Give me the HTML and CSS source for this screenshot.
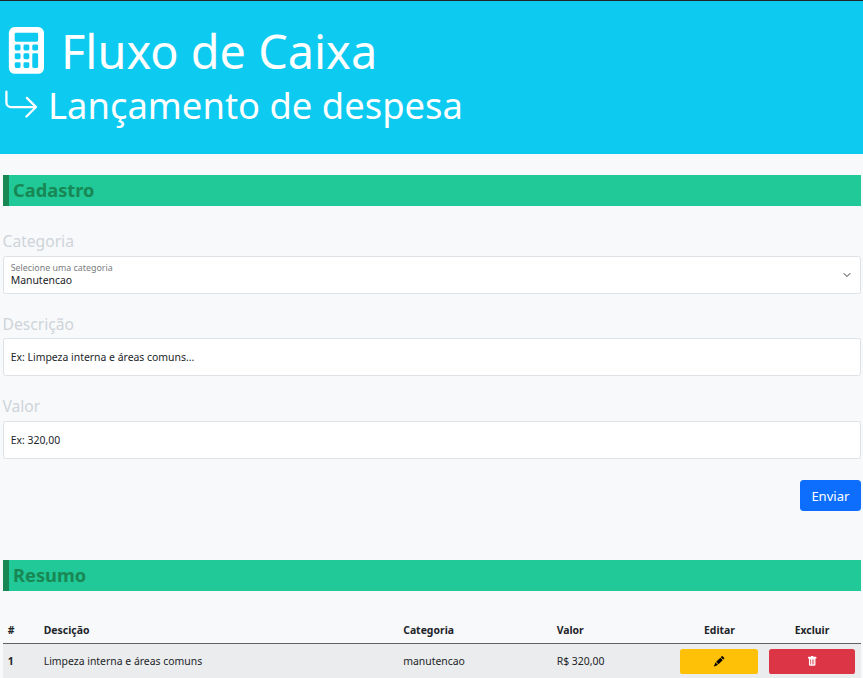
FILE: index.html
```html
<!DOCTYPE html>
<html lang="pt-BR">
<head>
<meta charset="utf-8">
<title>Fluxo de Caixa</title>
<link rel="stylesheet" href="styles.css">
</head>
<body>
<header class="hero">
  <h1 class="hero-title">
    <svg class="icon" viewBox="0 0 16 16" fill="currentColor"><path fill-rule="evenodd" d="M2 2a2 2 0 0 1 2-2h8a2 2 0 0 1 2 2v12a2 2 0 0 1-2 2H4a2 2 0 0 1-2-2V2zm2 .5v2a.5.5 0 0 0 .5.5h7a.5.5 0 0 0 .5-.5v-2a.5.5 0 0 0-.5-.5h-7a.5.5 0 0 0-.5.5zm0 4v1a.5.5 0 0 0 .5.5h1a.5.5 0 0 0 .5-.5v-1a.5.5 0 0 0-.5-.5h-1a.5.5 0 0 0-.5.5zM4.500 9a.5.5 0 0 0-.5.5v1a.5.5 0 0 0 .5.5h1a.5.5 0 0 0 .5-.5v-1a.5.5 0 0 0-.5-.5h-1zM4 12.500v1a.5.5 0 0 0 .5.5h1a.5.5 0 0 0 .5-.5v-1a.5.5 0 0 0-.5-.5h-1a.5.5 0 0 0-.5.5zM7.500 6a.5.5 0 0 0-.5.5v1a.5.5 0 0 0 .5.5h1a.5.5 0 0 0 .5-.5v-1a.5.5 0 0 0-.5-.5h-1zM7 9.500v1a.5.5 0 0 0 .5.5h1a.5.5 0 0 0 .5-.5v-1a.5.5 0 0 0-.5-.5h-1a.5.5 0 0 0-.5.5zm.5 2.500a.5.5 0 0 0-.5.5v1a.5.5 0 0 0 .5.5h1a.5.5 0 0 0 .5-.5v-1a.5.5 0 0 0-.5-.5h-1zM10 6.500v1a.5.5 0 0 0 .5.5h1a.5.5 0 0 0 .5-.5v-1a.5.5 0 0 0-.5-.5h-1a.5.5 0 0 0-.5.5zm.5 2.500a.5.5 0 0 0-.5.5v4a.5.5 0 0 0 .5.5h1a.5.5 0 0 0 .5-.5v-4a.5.5 0 0 0-.5-.5h-1z"/></svg>
    <span>Fluxo de Caixa</span>
  </h1>
  <p class="hero-subtitle">
    <svg class="icon" viewBox="0 0 16 16" fill="currentColor"><path fill-rule="evenodd" d="M1.500 1.500A.5.5 0 0 0 1 2v4.800a2.500 2.500 0 0 0 2.500 2.500h9.793l-3.347 3.346a.5.5 0 0 0 .708.708l4.200-4.200a.5.5 0 0 0 0-.708l-4-4a.5.5 0 0 0-.708.708L13.293 8.300H3.500A1.500 1.500 0 0 1 2 6.800V2a.5.5 0 0 0-.5-.5z"/></svg>
    <span>Lançamento de despesa</span>
  </p>
</header>
<main class="content">
  <h2 class="section-title">Cadastro</h2>
  <form class="form">
    <div class="group">
      <div class="label">Categoria</div>
      <div class="field select">
        <div><div class="hint">Selecione uma categoria</div><div class="value">Manutencao</div></div>
        <svg class="chevron" viewBox="0 0 16 16" fill="none" stroke="#343a40" stroke-width="2" stroke-linecap="round" stroke-linejoin="round"><path d="m2 5 6 6 6-6"/></svg>
      </div>
    </div>
    <div class="group">
      <div class="label">Descrição</div>
      <div class="field">Ex: Limpeza interna e áreas comuns...</div>
    </div>
    <div class="group">
      <div class="label">Valor</div>
      <div class="field">Ex: 320,00</div>
    </div>
    <button class="submit" type="button">Enviar</button>
  </form>
  <h2 class="section-title">Resumo</h2>
  <table class="table">
    <colgroup><col class="c-id"><col class="c-desc"><col class="c-cat"><col class="c-val"><col class="c-edit"><col class="c-del"></colgroup>
    <thead>
      <tr><th>#</th><th>Descição</th><th>Categoria</th><th>Valor</th><th class="center">Editar</th><th class="center">Excluir</th></tr>
    </thead>
    <tbody>
      <tr>
        <th>1</th><td>Limpeza interna e áreas comuns</td><td>manutencao</td><td>R$ 320,00</td>
        <td><button class="action edit" type="button" aria-label="Editar"><svg viewBox="0 0 16 16" fill="currentColor"><path d="M12.854.146a.5.5 0 0 0-.707 0L10.500 1.793 14.207 5.500l1.647-1.646a.5.5 0 0 0 0-.708l-3-3zm.646 6.061L9.793 2.500 3.293 9H3.500a.5.5 0 0 1 .5.5v.5h.5a.5.5 0 0 1 .5.5v.5h.5a.5.5 0 0 1 .5.5v.5h.5a.5.5 0 0 1 .5.5v.207l6.500-6.500zm-7.468 7.468A.5.5 0 0 1 6 13.500V13h-.5a.5.5 0 0 1-.5-.5V12h-.5a.5.5 0 0 1-.5-.5V11h-.5a.5.5 0 0 1-.5-.5V10h-.5a.499.499 0 0 1-.175-.032l-.179.178a.5.5 0 0 0-.11.168l-2 5a.5.5 0 0 0 .65.65l5-2a.5.5 0 0 0 .168-.11l.178-.178z"/></svg></button></td>
        <td><button class="action delete" type="button" aria-label="Excluir"><svg viewBox="0 0 16 16" fill="currentColor"><path fill-rule="evenodd" d="M2.500 1a1 1 0 0 0-1 1v1a1 1 0 0 0 1 1H3v9a2 2 0 0 0 2 2h6a2 2 0 0 0 2-2V4h.5a1 1 0 0 0 1-1V2a1 1 0 0 0-1-1H10a1 1 0 0 0-1-1H7a1 1 0 0 0-1 1H2.500zm3 4a.5.5 0 0 1 .5.5v7a.5.5 0 0 1-1 0v-7a.5.5 0 0 1 .5-.5zM8 5a.5.5 0 0 1 .5.5v7a.5.5 0 0 1-1 0v-7A.5.5 0 0 1 8 5zm3 .5v7a.5.5 0 0 1-1 0v-7a.5.5 0 0 1 1 0z"/></svg></button></td>
      </tr>
    </tbody>
  </table>
</main>
</body>
</html>
```
FILE: styles.css
```css
* { box-sizing: border-box; }
body {
  margin: 0;
  height: 678px;
  overflow: hidden;
  background: #f8f9fa;
  color: #212529;
  font: 10.43px/16px "Noto Sans", sans-serif;
}
.hero {
  height: 153.6px;
  padding: 22px 2.6px 0;
  border-top: 1px solid #212529;
  background: #0dcaf0;
  color: #fff;
}
.hero-title, .hero-subtitle {
  display: flex;
  align-items: flex-start;
  margin: 0;
  font-weight: 400;
  white-space: nowrap;
}
.hero-title { height: 58px; gap: 11.6px; font-size: 46.85px; line-height: 57px; }
.hero-subtitle { height: 50px; gap: 9px; font-size: 36.4px; line-height: 48.5px; }
.icon { flex: none; width: 1em; height: 1em; }
.hero-title .icon { margin-top: 4px; }
.hero-subtitle .icon { margin-top: 6.3px; }
.content { padding: 21.6px 2.5px 0; }
.section-title {
  height: 30.6px;
  margin: 0;
  padding-left: 4.6px;
  border-left: 6px solid #198754;
  background: #20c997;
  color: #198754;
  font-size: 18.25px;
  font-weight: 700;
  line-height: 30px;
}
.form {
  display: flex;
  flex-direction: column;
  height: 354.2px;
  padding-top: 23.5px;
}
.group { height: 82.5px; }
.label {
  height: 26.4px;
  color: #ced4da;
  font-size: 15.64px;
  line-height: 24px;
}
.field {
  display: flex;
  align-items: center;
  height: 38px;
  padding: 0 7.2px;
  border: 1px solid #dee2e6;
  border-radius: 2.6px;
  background: #fff;
}
.select { justify-content: space-between; }
.hint { color: #7a7d80; font-size: 8.87px; line-height: 12px; }
.value { line-height: 13px; }
.chevron { width: 8px; height: 8px; margin-right: 1.5px; }
.submit {
  align-self: flex-end;
  width: 60.3px;
  height: 31px;
  margin-top: 3.4px;
  padding: 0;
  border: 0;
  border-radius: 3.5px;
  background: #0d6efd;
  color: #fff;
  font: 13.03px/30px "Noto Sans", sans-serif;
}
.table {
  width: 100%;
  margin-top: 26px;
  border-collapse: collapse;
  table-layout: fixed;
}
.c-id { width: 36px; }
.c-desc { width: 359.5px; }
.c-cat { width: 153.5px; }
.c-val { width: 123.8px; }
.c-edit { width: 88.3px; }
.table th, .table td { padding: 0 5.2px; text-align: left; }
.table thead tr { height: 27px; border-bottom: 1px solid #5f6266; }
.table tbody tr { height: 35px; background: #ebeced; }
.table .center { text-align: center; }
.action {
  display: flex;
  align-items: center;
  justify-content: center;
  width: 100%;
  height: 25px;
  padding: 0;
  border: 0;
  border-radius: 2.6px;
}
.action svg { width: 10.43px; height: 10.43px; }
.edit { background: #ffc107; color: #000; }
.delete { background: #dc3545; color: #fff; }
```
